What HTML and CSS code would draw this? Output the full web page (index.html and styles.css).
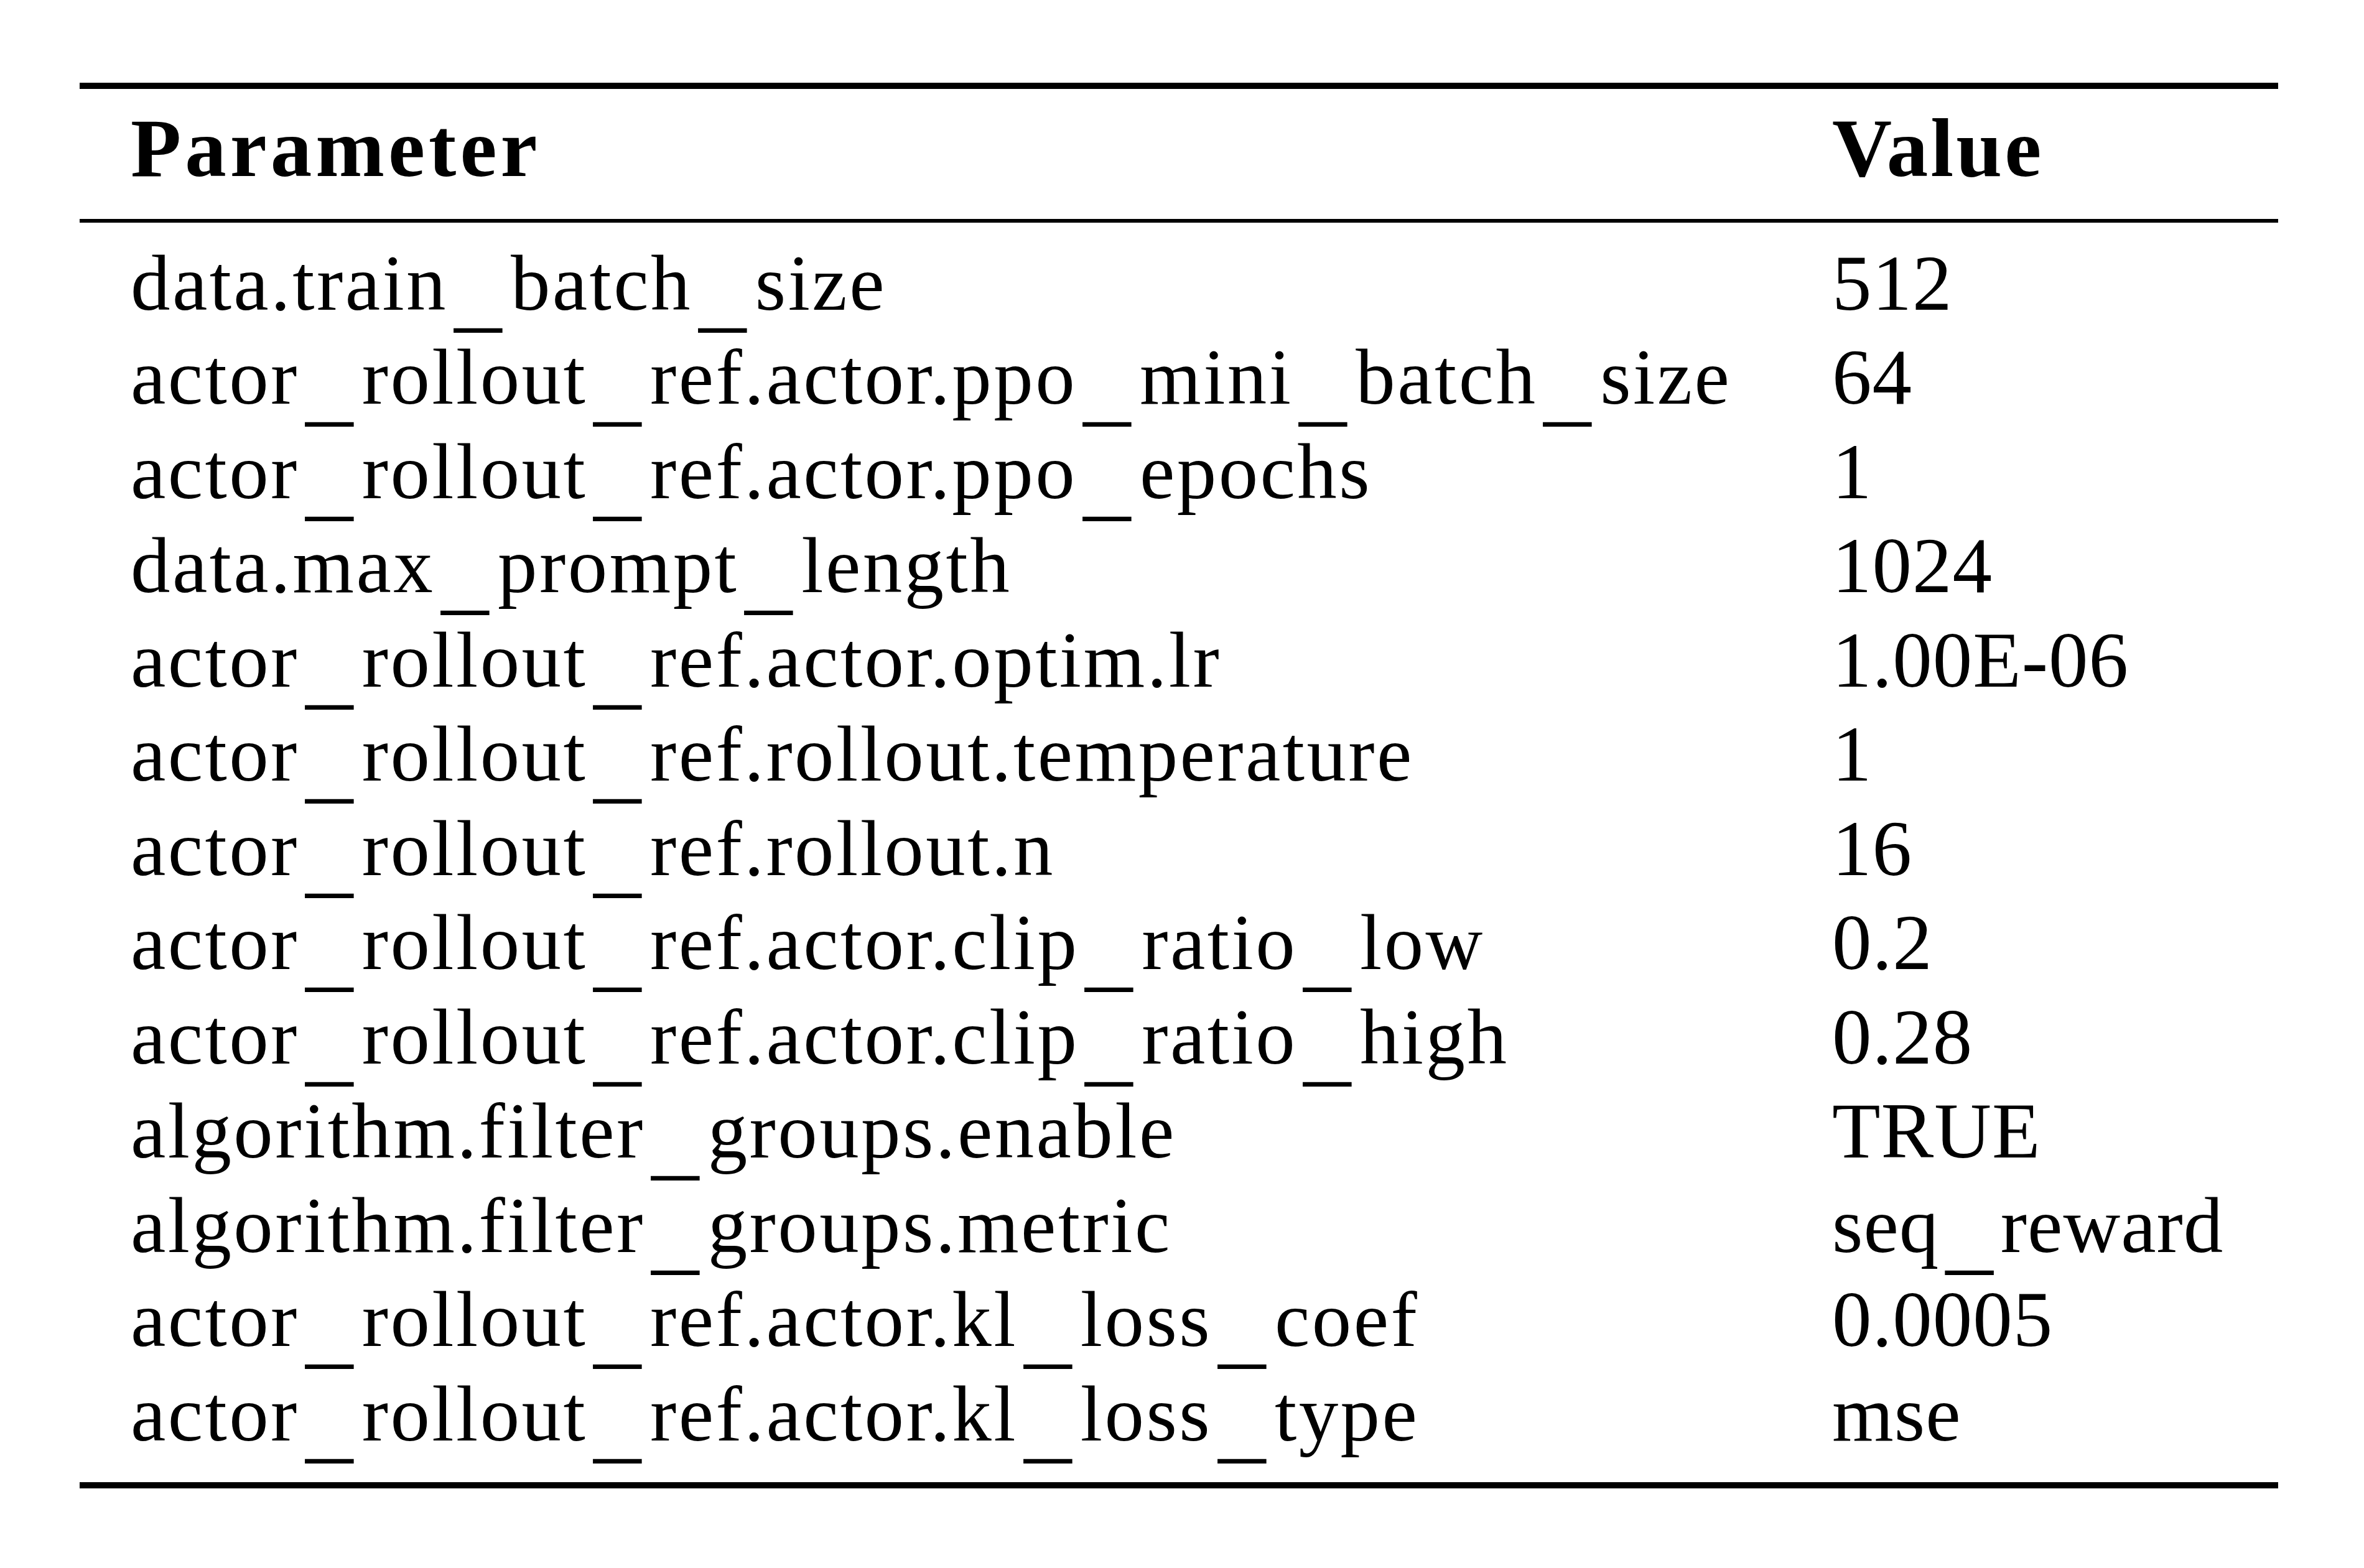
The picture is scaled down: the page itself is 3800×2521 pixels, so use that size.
FILE: index.html
```html
<!DOCTYPE html>
<html>
<head>
<meta charset="utf-8">
<link rel="stylesheet" href="styles.css">
</head>
<body>
<table class="params">
  <thead>
    <tr><th class="c-param">Parameter</th><th class="c-value">Value</th></tr>
  </thead>
  <tbody>
    <tr><td class="c-param">data.train<span class="us">_</span>batch<span class="us">_</span>size</td><td class="c-value">512</td></tr>
    <tr><td class="c-param">actor<span class="us">_</span>rollout<span class="us">_</span>ref.actor.ppo<span class="us">_</span>mini<span class="us">_</span>batch<span class="us">_</span>size</td><td class="c-value">64</td></tr>
    <tr><td class="c-param">actor<span class="us">_</span>rollout<span class="us">_</span>ref.actor.ppo<span class="us">_</span>epochs</td><td class="c-value">1</td></tr>
    <tr><td class="c-param">data.max<span class="us">_</span>prompt<span class="us">_</span>length</td><td class="c-value">1024</td></tr>
    <tr><td class="c-param">actor<span class="us">_</span>rollout<span class="us">_</span>ref.actor.optim.lr</td><td class="c-value">1.00E-06</td></tr>
    <tr><td class="c-param">actor<span class="us">_</span>rollout<span class="us">_</span>ref.rollout.temperature</td><td class="c-value">1</td></tr>
    <tr><td class="c-param">actor<span class="us">_</span>rollout<span class="us">_</span>ref.rollout.n</td><td class="c-value">16</td></tr>
    <tr><td class="c-param">actor<span class="us">_</span>rollout<span class="us">_</span>ref.actor.clip<span class="us">_</span>ratio<span class="us">_</span>low</td><td class="c-value">0.2</td></tr>
    <tr><td class="c-param">actor<span class="us">_</span>rollout<span class="us">_</span>ref.actor.clip<span class="us">_</span>ratio<span class="us">_</span>high</td><td class="c-value">0.28</td></tr>
    <tr><td class="c-param">algorithm.filter<span class="us">_</span>groups.enable</td><td class="c-value">TRUE</td></tr>
    <tr><td class="c-param">algorithm.filter<span class="us">_</span>groups.metric</td><td class="c-value">seq<span class="us">_</span>reward</td></tr>
    <tr><td class="c-param">actor<span class="us">_</span>rollout<span class="us">_</span>ref.actor.kl<span class="us">_</span>loss<span class="us">_</span>coef</td><td class="c-value">0.0005</td></tr>
    <tr><td class="c-param">actor<span class="us">_</span>rollout<span class="us">_</span>ref.actor.kl<span class="us">_</span>loss<span class="us">_</span>type</td><td class="c-value">mse</td></tr>
  </tbody>
</table>
</body>
</html>
```

FILE: styles.css
```css
html, body {
  margin: 0;
  padding: 0;
  background: #ffffff;
}

body {
  font-family: "Liberation Serif", "Times New Roman", serif;
  color: #000000;
}

.params {
  margin: 133px 0 0 128px;
  width: 3534px;
  border-collapse: collapse;
  border-spacing: 0;
  table-layout: fixed;
}

.params th,
.params td {
  padding: 0;
  text-align: left;
  vertical-align: baseline;
  white-space: nowrap;
}

.params .c-param {
  width: 2735px;
  padding-left: 82px;
}

.params thead th {
  font-weight: bold;
  font-size: 133px;
  line-height: 151.5px;
  letter-spacing: 6px;
  border-top: 10px solid #000;
  border-bottom: 6px solid #000;
  padding-top: 20px;
  padding-bottom: 37px;
}

.params thead th.c-value {
  letter-spacing: 4px;
}

.params tbody td {
  font-size: 127px;
  line-height: 151.5px;
  letter-spacing: 3.4px;
}

.params tbody td.c-value {
  letter-spacing: 1px;
}

.us {
  display: inline-block;
  margin: 0 17px;
  transform: scale(1.2, 1.15);
  transform-origin: 50% 0;
}

.params tbody tr:first-child td {
  padding-top: 22px;
}

.params tbody tr:last-child td {
  padding-bottom: 34px;
  border-bottom: 10px solid #000;
}
```
